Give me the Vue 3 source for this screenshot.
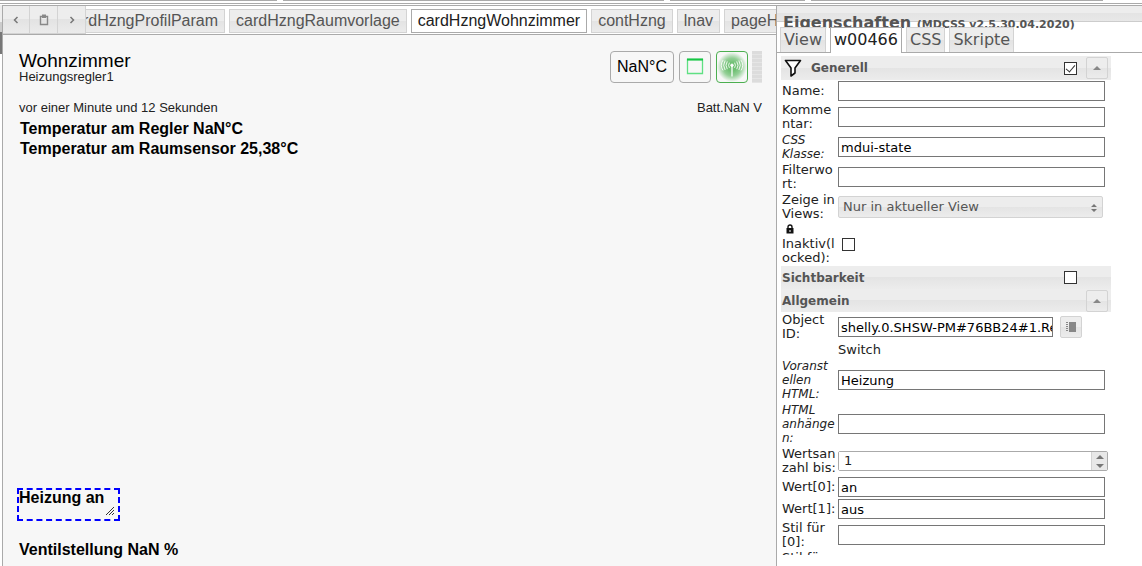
<script setup>
import { ref } from 'vue'

const viewTabs = [
  { name: 'cardHzngProfilParam' },
  { name: 'cardHzngRaumvorlage' },
  { name: 'cardHzngWohnzimmer', active: true },
  { name: 'contHzng' },
  { name: 'lnav' },
  { name: 'pageHeizung' }
]
const panelTabs = [
  { name: 'View' },
  { name: 'w00466', active: true },
  { name: 'CSS' },
  { name: 'Skripte' }
]

const general = ref([
  { id: 'name', label: 'Name:', value: '' },
  { id: 'comment', label: 'Komme\nntar:', value: '' },
  { id: 'class', label: 'CSS\nKlasse:', value: 'mdui-state', italic: true },
  { id: 'filter', label: 'Filterwo\nrt:', value: '' }
])
const html = ref([
  { id: 'prepend', label: 'Voranst\nellen\nHTML:', value: 'Heizung', italic: true },
  { id: 'append', label: 'HTML\nanhänge\nn:', value: '', italic: true }
])
const values = ref([
  { id: 'v0', label: 'Wert[0]:', value: 'an' },
  { id: 'v1', label: 'Wert[1]:', value: 'aus' },
  { id: 's0', label: 'Stil für\n[0]:', value: '' },
  { id: 's1', label: 'Stil für\n[1]:', value: '' }
])
const objectId = ref('shelly.0.SHSW-PM#76BB24#1.Relay0.Switch')
const count = ref(1)
const showGeneral = ref(true)
const visibility = ref(false)
const locked = ref(false)
</script>

<template>
  <div class="app">
    <div class="topbar">
      <span class="seg s1"></span><span class="seg s2"></span><span class="seg s3"></span><span class="seg s4"></span><span class="seg rest"></span>
    </div>
    <div class="body">
      <div class="edge"><i class="e1"></i><i class="e2"></i><i class="e3"></i></div>

      <main class="editor">
        <nav class="viewbar">
          <div class="tools">
            <button class="tool" aria-label="Zurück">
              <svg width="12" height="12" viewBox="0 0 12 12"><path d="M7.5 3 4.5 6l3 3" fill="none" stroke="#777" stroke-width="1.5" /></svg>
            </button>
            <button class="tool" aria-label="Views">
              <svg width="12" height="14" viewBox="0 0 12 14"><path d="M2.500 3.500h7v8h-7z" fill="none" stroke="#888" stroke-width="1.4" /><path d="M4 1.500h4V5H4z" fill="#888" /></svg>
            </button>
            <button class="tool" aria-label="Weiter">
              <svg width="12" height="12" viewBox="0 0 12 12"><path d="m4.500 3 3 3-3 3" fill="none" stroke="#777" stroke-width="1.5" /></svg>
            </button>
          </div>
          <div class="strip">
            <a v-for="t in viewTabs" :key="t.name" href="#" class="vtab" :class="{ active: t.active }">{{ t.name }}</a>
          </div>
        </nav>

        <section class="card">
          <header class="cardhead">
            <div>
              <div class="title">Wohnzimmer</div>
              <div class="sub">Heizungsregler1</div>
            </div>
            <div class="states">
              <span class="state temp">NaN°C</span>
              <span class="state">
                <svg width="20" height="20" viewBox="0 0 20 20"><path d="M2.500 2.500h15v14h-15z" fill="none" stroke="#5fe083" stroke-width="1.300" /><path d="M2 2.500h16" stroke="#16c544" stroke-width="2" /></svg>
              </span>
              <span class="state signal">
                <svg width="24" height="24" viewBox="0 0 28 28" fill="none" stroke="#fff" stroke-width="1">
                  <path d="M14 12v13" stroke-width="1.500" /><circle cx="14" cy="12" r="1.500" fill="#fff" />
                  <path d="M11 9q-2 3 0 6M8.500 7.500q-3 4.500 0 9M6 6.500q-3.500 5.500 0 11M3.500 6q-4 6 0 12" />
                  <path d="M17 9q2 3 0 6M19.500 7.500q3 4.500 0 9M22 6.500q3.500 5.500 0 11M24.500 6q4 6 0 12" />
                </svg>
              </span>
              <span class="level"></span>
            </div>
          </header>
          <div class="info"><span>vor einer Minute und 12 Sekunden</span><span>Batt.NaN V</span></div>
          <div class="readings">
            <div>Temperatur am Regler NaN°C</div>
            <div>Temperatur am Raumsensor 25,38°C</div>
          </div>
          <div class="selected">
            <span>Heizung an</span>
            <svg class="grip" width="8" height="8" viewBox="0 0 8 8"><path d="M0 8 8 0M3 8l5-5M6 8l2-2" stroke="#333" /></svg>
          </div>
          <div class="valve">Ventilstellung NaN %</div>
        </section>
      </main>

      <aside class="panel">
        <div class="phead"><h2>Eigenschaften <small>(MDCSS v2.5.30.04.2020)</small></h2></div>
        <nav class="ptabs">
          <a v-for="t in panelTabs" :key="t.name" href="#" class="ptab" :class="{ active: t.active }">{{ t.name }}</a>
        </nav>
        <div class="props">
          <div class="group first">
            <svg class="funnel" width="18" height="18" viewBox="0 0 18 18"><path d="M1.500 1.500h15L11 9v5l-4 3V9z" fill="#fff" stroke="#111" stroke-width="1.600" stroke-linejoin="round" /></svg>
            <label class="gname" for="g1">Generell</label>
            <input id="g1" v-model="showGeneral" type="checkbox" class="check">
            <button class="btn" aria-label="Einklappen"><svg width="8" height="4" viewBox="0 0 8 4"><path d="M0 4 4 0l4 4z" fill="#888" /></svg></button>
          </div>
          <div v-for="f in general" :key="f.id" class="row">
            <label class="lab" :class="{ it: f.italic }" :for="f.id">{{ f.label }}</label>
            <input :id="f.id" v-model="f.value" type="text" class="text">
          </div>
          <div class="row">
            <label class="lab" for="views">Zeige in<br>Views:</label>
            <span class="pick">
              <select id="views"><option>Nur in aktueller View</option></select>
              <svg width="6" height="8" viewBox="0 0 6 8"><path d="M0 3 3 0l3 3zM0 5l3 3 3-3z" fill="#777" /></svg>
            </span>
          </div>
          <div class="row">
            <label class="lab" for="lock"><svg class="lock" width="8" height="10" viewBox="0 0 8 10"><path d="M2 5V3a2 2 0 0 1 4 0v2" fill="none" stroke="#111" stroke-width="1.400" /><path d="M.5 4h7v5.500h-7z" fill="#111" /><path d="M3.500 6h1v2h-1z" fill="#fff" /></svg><br>Inaktiv(l<br>ocked):</label>
            <input id="lock" v-model="locked" type="checkbox" class="check inrow">
          </div>
          <div class="group">
            <label class="gname" for="g2">Sichtbarkeit</label>
            <input id="g2" v-model="visibility" type="checkbox" class="check">
            <span class="nobtn"></span>
          </div>
          <div class="group">
            <span class="gname">Allgemein</span>
            <button class="btn" aria-label="Einklappen"><svg width="8" height="4" viewBox="0 0 8 4"><path d="M0 4 4 0l4 4z" fill="#888" /></svg></button>
          </div>
          <div class="row">
            <label class="lab" for="oid">Object<br>ID:</label>
            <span class="oid">
              <input id="oid" v-model="objectId" type="text" class="text">
              <button class="btn" aria-label="Objekt wählen"><svg width="10" height="10" viewBox="0 0 10 10"><path d="M3 0h7v10H3z" fill="#888" /><path d="M1 0v10" stroke="#888" stroke-width="2" stroke-dasharray="1 1" /></svg></button>
            </span>
          </div>
          <div class="row"><span></span><span>Switch</span></div>
          <div v-for="f in html" :key="f.id" class="row">
            <label class="lab it" :for="f.id">{{ f.label }}</label>
            <input :id="f.id" v-model="f.value" type="text" class="text">
          </div>
          <div class="row">
            <label class="lab" for="count">Wertsan<br>zahl bis:</label>
            <span class="spin">
              <input id="count" v-model="count" type="text">
              <span class="arrows">
                <button aria-label="Mehr" @click="count++"><svg width="8" height="4" viewBox="0 0 8 4"><path d="M0 4 4 0l4 4z" fill="#777" /></svg></button>
                <button aria-label="Weniger" @click="count--"><svg width="8" height="4" viewBox="0 0 8 4"><path d="M0 0h8L4 4z" fill="#777" /></svg></button>
              </span>
            </span>
          </div>
          <div v-for="f in values" :key="f.id" class="row">
            <label class="lab" :for="f.id">{{ f.label }}</label>
            <input :id="f.id" v-model="f.value" type="text" class="text">
          </div>
        </div>
      </aside>
    </div>
  </div>
</template>

<style>
body { margin: 0; background: #fff; }
</style>

<style scoped>
* { box-sizing: border-box; }
button, input, select { margin: 0; padding: 0; font: inherit; color: inherit; border-radius: 0; }
a { text-decoration: none; }
svg { display: block; }

.app { display: flex; flex-direction: column; height: 100vh; overflow: hidden; font-family: "Liberation Sans", Arial, sans-serif; color: #222; }
.topbar { display: flex; gap: 6px; height: 4px; border-bottom: 1px solid #aaa; }
.seg { height: 1px; background: #aaa; }
.s1 { flex: 277; }
.s2 { flex: 381; }
.s3 { flex: 135; }
.s4 { flex: 292; }
.rest { flex: 33; background: none; }
.body { flex: 1; display: flex; min-height: 0; margin-top: 1px; }
.edge { width: 2px; display: flex; flex-direction: column; }
.e1 { height: 17px; background: #eee; }
.e2 { height: 10px; background: #ccc; }
.e3 { height: 22px; background: #777; }

.editor { flex: 1; min-width: 0; display: flex; flex-direction: column; border: 1px solid #aaa; border-width: 1px 0 0 1px; }
.viewbar { display: flex; height: 29px; border-bottom: 1px solid #aaa; flex: none; }
.tools { display: flex; flex: none; height: 28px; }
.tool { width: 28px; display: flex; align-items: center; justify-content: center; border: 1px solid #d3d3d3; border-width: 0 1px 1px 0; background: linear-gradient(#ededed 50%, #e3e3e3 50%, #ebebeb); }
.tool:first-child { width: 27px; }
.strip { flex: 1; min-width: 0; display: flex; gap: 4px; overflow: hidden; padding-top: 3px; }
.vtab { flex: none; height: 24px; padding: 0 6px; border: 1px solid #d3d3d3; font-size: 16px; line-height: 22px; color: #555; background: linear-gradient(#ededed 50%, #e3e3e3 50%, #ebebeb); }
.vtab:first-child { margin-left: -27px; }
.vtab.active { background: #fff; border-color: #aaa; color: #212121; }

.card { flex: 1; padding: 16px 14px 0 15px; background: #f7f7f7; color: #000; display: flex; flex-direction: column; }
.cardhead { display: flex; justify-content: space-between; align-items: flex-start; height: 49px; padding-left: 1px; }
.title { font-size: 19px; line-height: 20px; }
.sub { font-size: 13px; line-height: 12px; color: #222; }
.states { display: flex; gap: 5px; }
.state { width: 32px; height: 32px; display: flex; align-items: center; justify-content: center; border: 1px solid #aaa; border-radius: 4px; }
.temp { width: 64px; font-size: 16px; }
.signal { border-color: #4caf50; background: radial-gradient(circle, #6fc073 20%, #93cf96 42%, #f7f7f7 70%); }
.level { width: 10px; height: 32px; margin-left: -1px; background: repeating-linear-gradient(#dcdcdc 0 3px, #e5e5e5 3px 4px); }
.info { display: flex; justify-content: space-between; font-size: 13px; line-height: 15px; color: #222; padding-left: 1px; }
.readings { margin-top: 4px; padding-left: 2px; font-size: 16px; font-weight: bold; line-height: 20px; }
.selected { width: 103px; height: 33px; margin: auto 0 0 -1px; border: 2px dashed #00f; font-size: 16px; line-height: 16px; font-weight: bold; white-space: nowrap; position: relative; }
.grip { position: absolute; right: 4px; bottom: 4px; }
.valve { margin: 20px 0 8px; padding-left: 1px; font-size: 16px; line-height: 17px; font-weight: bold; }

.panel { width: 366px; flex: none; display: flex; flex-direction: column; border-left: 1px solid #aaa; border-top: 1px solid #aaa; font-family: "DejaVu Sans", Verdana, sans-serif; font-size: 13px; color: #222; background: #fff; }
.phead { height: 16px; flex: none; background: linear-gradient(#ededed 50%, #e4e4e4 50%, #e8e8e8); border-bottom: 1px solid #ccc; }
h2 { margin: 0; padding: 7px 0 0 6px; font-size: 16px; line-height: 20px; color: #555; white-space: nowrap; }
small { font-size: 11px; }
.ptabs { display: flex; gap: 4px; height: 31px; padding: 4px 0 0 3px; flex: none; position: relative; border-bottom: 1px solid #aaa; font-size: 16px; line-height: 23px; }
.ptab { height: 25px; margin-top: 1px; padding: 0 3px; border: 1px solid #d3d3d3; border-bottom: 0; color: #555; background: linear-gradient(#ededed 50%, #e3e3e3 50%, #ebebeb); }
.ptab.active { height: 26px; background: #fff; border-color: #aaa; color: #212121; }

.props { margin: 3px 31px 11px 4px; flex: 1; min-height: 0; overflow: hidden; }
.group { display: flex; align-items: center; height: 23px; padding-right: 3px; background: linear-gradient(#ededed 50%, #e4e4e4 50%, #ececec); font-size: 12px; font-weight: bold; color: #555; }
.first { height: 24px; padding-left: 3px; }
.funnel { margin-right: 8px; }
.gname { flex: 1; padding-left: 1px; }
.check { appearance: none; width: 13px; height: 13px; border: 1px solid #333; background: #fff; display: flex; justify-content: center; margin-right: 9px; }
.check:checked::after { content: ""; width: 4px; height: 8px; border: solid #333; border-width: 0 1px 1px 0; transform: rotate(40deg); }
.check.inrow { margin-left: 4px; }
.btn { width: 22px; height: 22px; display: flex; align-items: center; justify-content: center; border: 1px solid #d3d3d3; border-radius: 2px; background: linear-gradient(#ededed 50%, #e4e4e4 50%, #ececec); }
.nobtn { width: 22px; }
.row { display: grid; grid-template-columns: 56px 1fr; align-items: center; padding: 1px 3px 1px 1px; line-height: 14px; }
.lab { white-space: pre; }
.it { font-size: 12px; font-style: italic; }
.lock { display: inline-block; margin-left: 4px; }
.text { width: calc(100% - 3px); height: 20px; border: 1px solid #767676; padding: 0 0 0 2px; background: #fff; color: #000; }
.pick { position: relative; margin-right: 5px; }
.pick select { appearance: none; display: block; width: 100%; height: 22px; border: 1px solid #d3d3d3; border-radius: 2px; padding: 0 4px; color: #555; background: linear-gradient(#ededed 50%, #e4e4e4 50%, #ececec); }
.pick svg { position: absolute; right: 6px; top: 8px; pointer-events: none; }
.oid { display: flex; align-items: center; gap: 7px; margin-right: 26px; }
.oid .text { flex: 1; min-width: 0; }
.spin { display: flex; height: 20px; border: 1px solid #aaa; border-radius: 2px; }
.spin input { flex: 1; min-width: 0; border: 0; padding: 0 5px; background: #fff; }
.arrows { width: 16px; display: flex; flex-direction: column; border-left: 1px solid #d3d3d3; }
.arrows button { flex: 1; display: flex; align-items: center; justify-content: center; border: 0; background: #e8e8e8; }
</style>
